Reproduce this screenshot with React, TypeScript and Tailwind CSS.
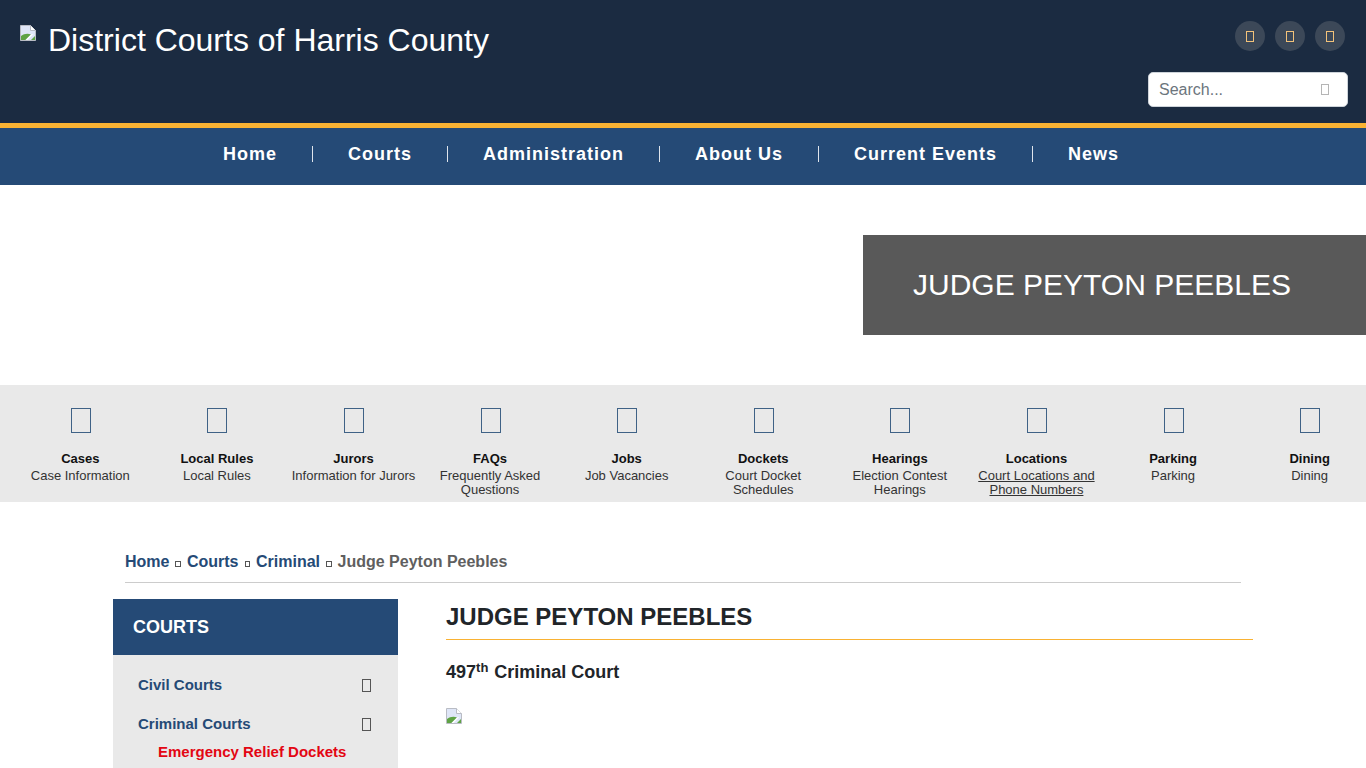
const navItems = ['Home', 'Courts', 'Administration', 'About Us', 'Current Events', 'News']

const quickLinks = [
  { title: 'Cases', text: ['Case Information'] },
  { title: 'Local Rules', text: ['Local Rules'] },
  { title: 'Jurors', text: ['Information for Jurors'] },
  { title: 'FAQs', text: ['Frequently Asked', 'Questions'] },
  { title: 'Jobs', text: ['Job Vacancies'] },
  { title: 'Dockets', text: ['Court Docket', 'Schedules'] },
  { title: 'Hearings', text: ['Election Contest', 'Hearings'] },
  { title: 'Locations', text: ['Court Locations and', 'Phone Numbers'], underline: true },
  { title: 'Parking', text: ['Parking'] },
  { title: 'Dining', text: ['Dining'] },
]

function BrokenImage({ className }: { className: string }) {
  return (
    <svg className={className} viewBox="0 0 16 16" aria-hidden="true">
      <path d="M0.5 0.5H10.5L15.5 5.5V15.5H0.5Z" fill="#dfe6f7" stroke="#b9bcc4" />
      <path d="M10.5 0.5V5.5H15.5" fill="#ffffff" stroke="#b9bcc4" />
      <path d="M1 15V11C4 8.5 8 8 11 9.5L5.5 15Z" fill="#5fa344" />
      <path d="M11 15L15 11V15Z" fill="#5fa344" />
      <path d="M5.5 15L11 9.5L13.5 9L7.5 15Z" fill="#ffffff" />
    </svg>
  )
}

function App() {
  return (
    <main className="h-[768px] overflow-hidden bg-white font-['Liberation_Sans',Arial,sans-serif] text-[#212529]">
      <header className="flex h-[128px] justify-between border-b-[5px] border-[#f9b233] bg-[#1b2b41]">
        <div className="flex items-start pl-5 pt-[25px]">
          <BrokenImage className="mr-3 h-4 w-4 shrink-0" />
          <span className="-mt-[7px] text-[32px] leading-[44px] text-white">District Courts of Harris County</span>
        </div>
        <div className="flex w-[236px] flex-col items-end pr-[18px] pt-[21px]">
          <div className="flex gap-[10px] pr-[3px]">
            {[0, 1, 2].map((item) => (
              <span className="flex h-[30px] w-[30px] items-center justify-center rounded-full bg-[#3c4858]" key={item}>
                <span className="h-[11px] w-2 border border-[#f2c27a]" />
              </span>
            ))}
          </div>
          <div className="mt-[21px] flex h-[35px] w-[200px] items-center justify-between rounded-[5px] border border-[#ced4da] bg-white pl-[10px] pr-[18px]">
            <span className="text-base text-[#6c757d]">Search...</span>
            <span className="h-[11px] w-2 border border-[#b5b5b5]" />
          </div>
        </div>
      </header>

      <nav className="flex h-[57px] items-center justify-center bg-[#254a76] pb-[6px] pr-[24px]">
        {navItems.map((item, index) => (
          <span
            className={`px-[35px] text-lg leading-[16px] font-bold tracking-[1px] text-white ${
              index < navItems.length - 1 ? 'border-r border-[#dfe5ec]' : ''
            }`}
            key={item}
          >
            {item}
          </span>
        ))}
      </nav>

      <section className="flex h-[200px] items-center justify-end bg-white">
        <div className="flex h-[100px] w-[503px] items-center bg-[#595959] pl-[50px]">
          <h1 className="text-[30px] leading-none font-normal text-white">JUDGE PEYTON PEEBLES</h1>
        </div>
      </section>

      <section className="grid h-[117px] grid-cols-[repeat(10,136.6px)] bg-[#e9e9e9] pl-3 pt-[23px]">
        {quickLinks.map((link) => (
          <div className="flex flex-col items-center text-center" key={link.title}>
            <span className="ml-px h-[25px] w-5 border border-[#3f6286]" />
            <span className="mt-[17px] text-[13px] leading-[17px] font-bold text-[#111111]">{link.title}</span>
            <span className="mt-[2px] flex flex-col items-center">
              {link.text.map((line) => (
                <span
                  className={`text-[13px] leading-[14px] whitespace-nowrap text-[#333333] ${link.underline ? 'underline' : ''}`}
                  key={line}
                >
                  {line}
                </span>
              ))}
            </span>
          </div>
        ))}
      </section>

      <div className="mx-auto w-[1140px] pt-[48px]">
        <div className="ml-3 mr-3 flex h-[33px] items-start gap-[6px] border-b border-[#cccccc] text-base leading-[23px] font-bold">
          <span className="text-[#254a76]">Home</span>
          <span className="mt-[11px] h-[6px] w-[5.5px] border border-[#555555]" />
          <span className="text-[#254a76]">Courts</span>
          <span className="mt-[11px] h-[6px] w-[5.5px] border border-[#555555]" />
          <span className="text-[#254a76]">Criminal</span>
          <span className="mt-[11px] h-[6px] w-[5.5px] border border-[#555555]" />
          <span className="text-[#5f5f5f]">Judge Peyton Peebles</span>
        </div>

        <div className="mt-4 flex gap-12">
          <aside className="w-[285px] shrink-0">
            <div className="flex h-[56px] items-center bg-[#254a76] pl-5 text-lg font-bold text-white">COURTS</div>
            <div className="h-[200px] bg-[#e9e9e9] pl-[25px] pr-[27px] pt-5 text-[#254a76]">
              <div className="flex h-[20px] items-center justify-between text-[15px] font-bold">
                <span>Civil Courts</span>
                <span className="h-[13px] w-[9px] border border-[#555555]" />
              </div>
              <div className="mt-[19px] flex h-[20px] items-center justify-between text-[15px] font-bold">
                <span>Criminal Courts</span>
                <span className="h-[13px] w-[9px] border border-[#555555]" />
              </div>
              <div className="mt-[8px] pl-5 text-[15px] leading-[20px] font-bold text-[#e30613]">
                Emergency Relief Dockets
              </div>
            </div>
          </aside>

          <section className="min-w-0 flex-1 pt-[3px]">
            <h2 className="border-b border-[#f9b233] pb-2 text-2xl leading-[29px] font-bold text-[#212529]">
              JUDGE PEYTON PEEBLES
            </h2>
            <p className="mt-[19px] text-lg leading-[27px] font-bold">
              497<sup className="pr-px text-[13px]">th</sup> Criminal Court
            </p>
            <BrokenImage className="mt-[22px] h-4 w-4" />
          </section>
        </div>
      </div>
    </main>
  )
}

export default App
